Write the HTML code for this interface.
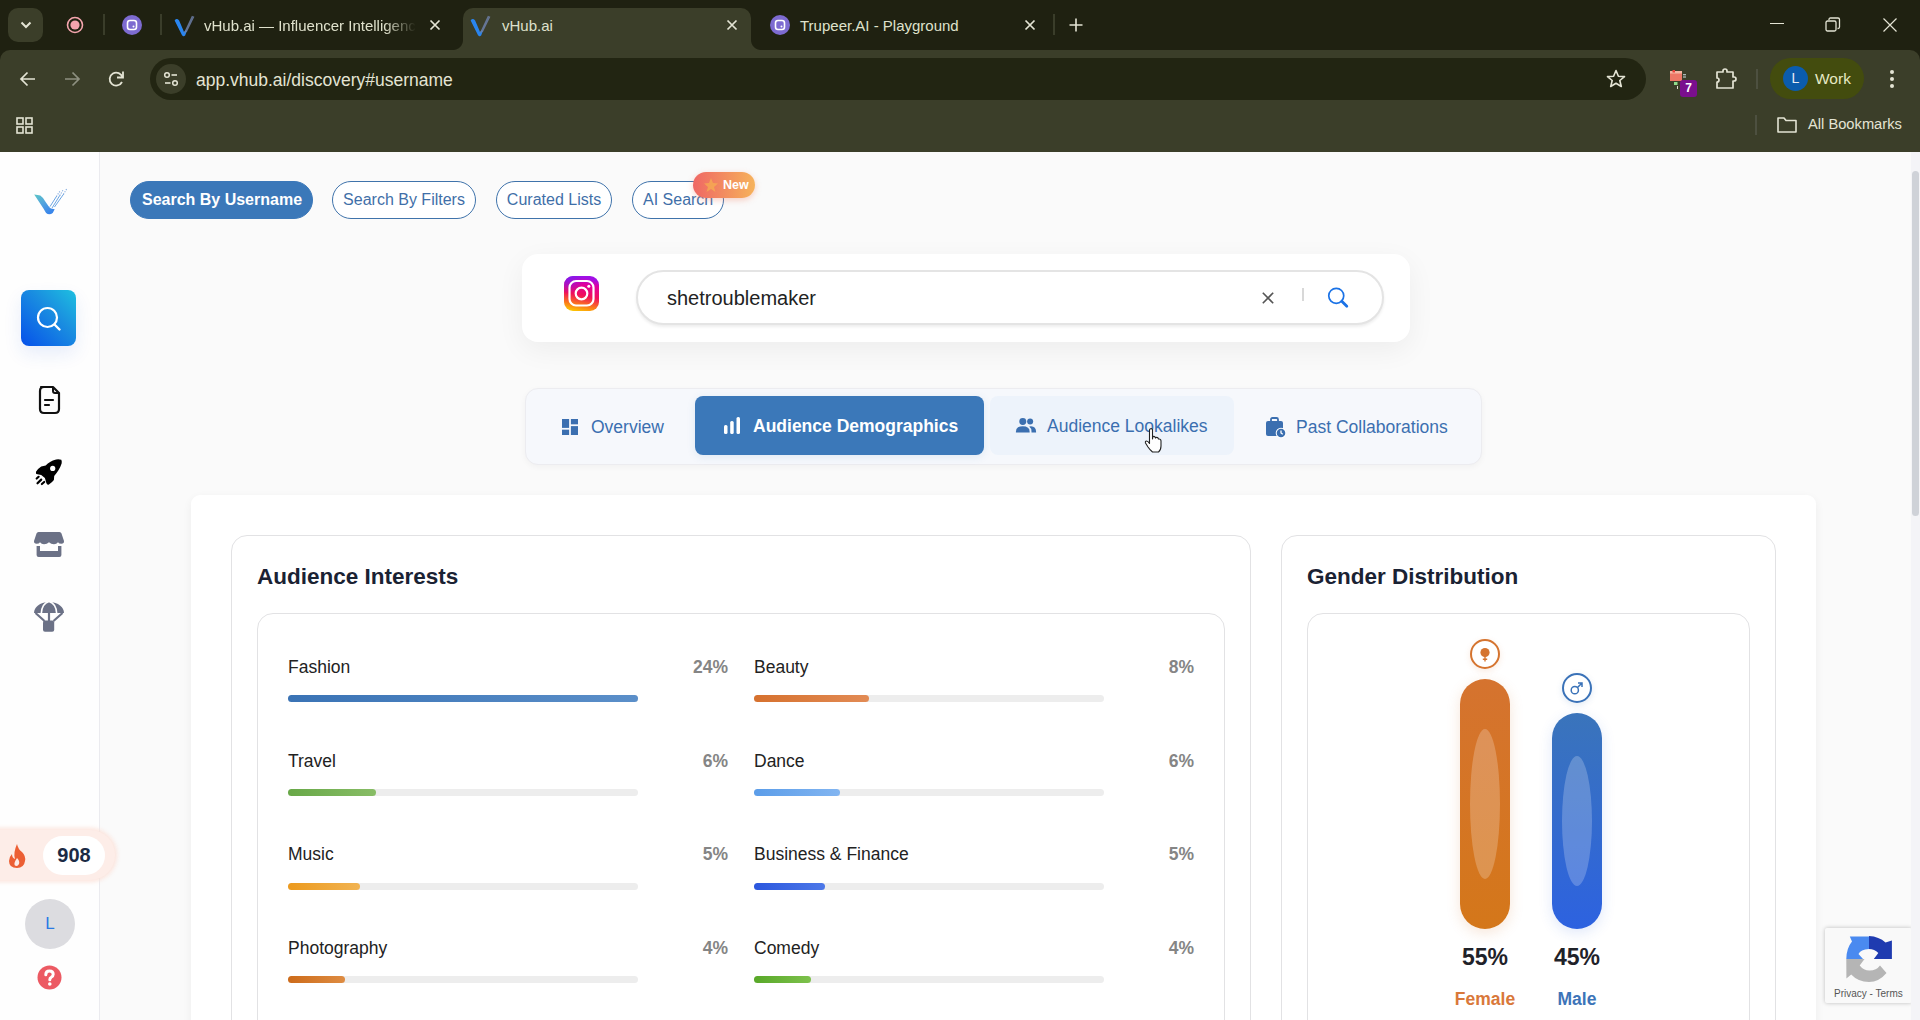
<!DOCTYPE html>
<html><head><meta charset="utf-8">
<style>
*{box-sizing:border-box;margin:0;padding:0}
html,body{width:1920px;height:1020px;overflow:hidden;font-family:"Liberation Sans",sans-serif;background:#1f2111}
.abs{position:absolute}
#tabs{position:absolute;left:0;top:0;width:1920px;height:50px;background:#1f2111}
#toolbar{position:absolute;left:0;top:50px;width:1920px;height:102px;background:#3b3e29;border-radius:10px 10px 0 0}
#page{position:absolute;left:0;top:152px;width:1920px;height:868px;background:#fafafa;overflow:hidden}
.pill{display:flex;align-items:center;justify-content:center;border-radius:20px;border:1.3px solid #3f73ab;background:#fff;color:#3f6fa8;font-size:16px;white-space:nowrap}
.pill.act{background:#3b78b9;border-color:#3b78b9;color:#fff;font-weight:bold}
.tabt{font-size:17.5px;color:#3b6fb0;white-space:nowrap}
.h2{font-size:22.5px;font-weight:bold;color:#1a2233;white-space:nowrap}
.lbl{font-size:17.5px;color:#222;white-space:nowrap}
.pct{font-size:17.5px;font-weight:bold;color:#858585;text-align:right;width:60px;white-space:nowrap}
.track{height:7.3px;border-radius:4px;background:#ededed;width:350px}
.fill{height:7.3px;border-radius:4px}
.gp{width:100px;text-align:center;font-size:23px;font-weight:bold;color:#1f2229}
.gl{width:100px;text-align:center;font-size:17.5px;font-weight:bold}
.tabtitle{position:absolute;font-size:15px;color:#dfe1cc;white-space:nowrap}
</style></head>
<body>
<div id="tabs">
  <!-- chevron button -->
  <div class="abs" style="left:8px;top:8px;width:35px;height:34px;border-radius:10px;background:#3b3e29"></div>
  <svg class="abs" style="left:19px;top:18px" width="14" height="14" viewBox="0 0 14 14"><path d="M2.5 4.5 L7 9 L11.5 4.5" stroke="#e4e4d4" stroke-width="2" fill="none"/></svg>
  <!-- record icon -->
  <svg class="abs" style="left:66px;top:16px" width="18" height="18" viewBox="0 0 18 18"><circle cx="9" cy="9" r="7.5" stroke="#f4a5ae" stroke-width="1.6" fill="none"/><circle cx="9" cy="9" r="4.6" fill="#f4a5ae"/></svg>
  <div class="abs" style="left:103px;top:14px;width:2px;height:21px;background:#3a3d2a"></div>
  <svg class="abs" style="left:122px;top:15px" width="20" height="20" viewBox="0 0 20 20"><circle cx="10" cy="10" r="10" fill="#7d6bd1"/><rect x="5.5" y="5.5" width="9" height="9" rx="2.5" stroke="#fff" stroke-width="1.6" fill="none"/><circle cx="11.5" cy="11.5" r="1" fill="#fff"/></svg>
  <div class="abs" style="left:160px;top:14px;width:2px;height:21px;background:#3a3d2a"></div>
  <!-- tab1 -->
  <svg class="abs" style="left:173px;top:13px" width="22" height="24" viewBox="0 0 22 24"><path d="M2.5 7.5 Q4 6 5.5 8 L10 18.5 Q11 20.5 12 19 L13 18 L11.5 22 Q10.5 23 9.5 21.5 Z" fill="#2a86f0" stroke="#2a86f0" stroke-width="1.6" stroke-linejoin="round"/><path d="M11.5 20 L19.5 3 M13.2 19 L20.8 3.5" stroke="#6d7fa8" stroke-width="1.3" opacity=".85"/></svg>
  <div class="tabtitle" style="left:204px;top:16.5px;width:212px;overflow:hidden;-webkit-mask-image:linear-gradient(90deg,#000 85%,transparent 100%)">vHub.ai — Influencer Intelligence</div>
  <svg class="abs" style="left:429px;top:19px" width="12" height="12" viewBox="0 0 12 12"><path d="M1.5 1.5 L10.5 10.5 M10.5 1.5 L1.5 10.5" stroke="#e4e4d4" stroke-width="1.7"/></svg>
  <!-- active tab -->
  <div class="abs" style="left:463px;top:8px;width:288px;height:42px;background:#3b3e29;border-radius:10px 10px 0 0"></div><div class="abs" style="left:453px;top:40px;width:10px;height:10px;background:radial-gradient(circle at 0 0,#1f2111 9.5px,#3b3e29 10.5px)"></div><div class="abs" style="left:751px;top:40px;width:10px;height:10px;background:radial-gradient(circle at 100% 0,#1f2111 9.5px,#3b3e29 10.5px)"></div>
  <svg class="abs" style="left:469px;top:13px" width="22" height="24" viewBox="0 0 22 24"><path d="M2.5 7.5 Q4 6 5.5 8 L10 18.5 Q11 20.5 12 19 L13 18 L11.5 22 Q10.5 23 9.5 21.5 Z" fill="#2a86f0" stroke="#2a86f0" stroke-width="1.6" stroke-linejoin="round"/><path d="M11.5 20 L19.5 3 M13.2 19 L20.8 3.5" stroke="#6d7fa8" stroke-width="1.3" opacity=".85"/></svg>
  <div class="tabtitle" style="left:502px;top:16.5px">vHub.ai</div>
  <svg class="abs" style="left:726px;top:19px" width="12" height="12" viewBox="0 0 12 12"><path d="M1.5 1.5 L10.5 10.5 M10.5 1.5 L1.5 10.5" stroke="#e4e4d4" stroke-width="1.7"/></svg>
  <!-- tab3 -->
  <svg class="abs" style="left:770px;top:15px" width="20" height="20" viewBox="0 0 20 20"><circle cx="10" cy="10" r="10" fill="#7d6bd1"/><rect x="5.5" y="5.5" width="9" height="9" rx="2.5" stroke="#fff" stroke-width="1.6" fill="none"/><circle cx="11.5" cy="11.5" r="1" fill="#fff"/></svg>
  <div class="tabtitle" style="left:800px;top:16.5px">Trupeer.AI - Playground</div>
  <svg class="abs" style="left:1024px;top:19px" width="12" height="12" viewBox="0 0 12 12"><path d="M1.5 1.5 L10.5 10.5 M10.5 1.5 L1.5 10.5" stroke="#e4e4d4" stroke-width="1.7"/></svg>
  <div class="abs" style="left:1053px;top:14px;width:2px;height:21px;background:#3a3d2a"></div>
  <svg class="abs" style="left:1068px;top:17px" width="16" height="16" viewBox="0 0 16 16"><path d="M8 1.5 V14.5 M1.5 8 H14.5" stroke="#e4e4d4" stroke-width="1.6"/></svg>
  <!-- window controls -->
  <div class="abs" style="left:1770px;top:23px;width:14px;height:1.2px;background:#e4e4d4"></div>
  <svg class="abs" style="left:1825px;top:17px" width="16" height="16" viewBox="0 0 16 16"><rect x="1" y="4" width="10" height="10" rx="1.5" stroke="#e4e4d4" stroke-width="1.3" fill="none"/><path d="M4 3 V2.5 Q4 1 5.5 1 H13 Q14.5 1 14.5 2.5 V10 Q14.5 11.5 13 11.5 H12.5" stroke="#e4e4d4" stroke-width="1.3" fill="none"/></svg>
  <svg class="abs" style="left:1882px;top:17px" width="16" height="16" viewBox="0 0 16 16"><path d="M1.5 1.5 L14.5 14.5 M14.5 1.5 L1.5 14.5" stroke="#e4e4d4" stroke-width="1.2"/></svg>
</div>

<div id="toolbar">
  <svg class="abs" style="left:18px;top:19px" width="20" height="20" viewBox="0 0 20 20"><path d="M17 10 H3.5 M9.5 3.5 L3 10 L9.5 16.5" stroke="#e4e4d4" stroke-width="1.7" fill="none"/></svg>
  <svg class="abs" style="left:62px;top:19px" width="20" height="20" viewBox="0 0 20 20"><path d="M3 10 H16.5 M10.5 3.5 L17 10 L10.5 16.5" stroke="#8e9080" stroke-width="1.7" fill="none"/></svg>
  <svg class="abs" style="left:107px;top:19px" width="20" height="20" viewBox="0 0 20 20"><path d="M15.5 8.5 A6.5 6.5 0 1 0 15 13" stroke="#e4e4d4" stroke-width="1.8" fill="none"/><path d="M16 2.5 V8.5 H10" stroke="#e4e4d4" stroke-width="1.8" fill="none"/></svg>
  <!-- address bar -->
  <div class="abs" style="left:150px;top:8px;width:1496px;height:42px;border-radius:21px;background:#222512"></div>
  <div class="abs" style="left:156px;top:14px;width:30px;height:30px;border-radius:15px;background:#3b3e29"></div>
  <svg class="abs" style="left:162px;top:20px" width="18" height="18" viewBox="0 0 18 18"><circle cx="5" cy="5" r="2.3" stroke="#e4e4d4" stroke-width="1.5" fill="none"/><path d="M9.5 5 H15" stroke="#e4e4d4" stroke-width="1.6"/><circle cx="13" cy="13" r="2.3" stroke="#e4e4d4" stroke-width="1.5" fill="none"/><path d="M3 13 H8.5" stroke="#e4e4d4" stroke-width="1.6"/></svg>
  <div class="abs" style="left:196px;top:20px;font-size:17.5px;color:#e4e4d4;letter-spacing:0px">app.vhub.ai/discovery#username</div>
  <svg class="abs" style="left:1605px;top:18px" width="22" height="22" viewBox="0 0 22 22"><path d="M11 2.5 L13.4 8.2 L19.5 8.6 L14.8 12.5 L16.3 18.5 L11 15.2 L5.7 18.5 L7.2 12.5 L2.5 8.6 L8.6 8.2 Z" stroke="#e4e4d4" stroke-width="1.6" fill="none" stroke-linejoin="round"/></svg>
  <!-- extension -->
  <svg class="abs" style="left:1668px;top:15px" width="32" height="32" viewBox="0 0 32 32"><rect x="2" y="6" width="12" height="10" fill="#ec7766"/><rect x="2" y="6" width="12" height="2.5" fill="#f2b7a4"/><rect x="4.5" y="5" width="2.5" height="2.5" fill="#e8403a"/><path d="M15 9.8 H18 M15 12 H18" stroke="#cfe0e6" stroke-width="1.1"/><rect x="6" y="17" width="3.5" height="3" fill="#8fdc8a"/><path d="M9.5 21 V24" stroke="#f0f0e0" stroke-width="0.9"/></svg>
  <div class="abs" style="left:1680px;top:30px;width:17px;height:17px;border-radius:3px;background:#7a0f8e;color:#fff;font-size:12px;font-weight:bold;text-align:center;line-height:17px">7</div>
  <svg class="abs" style="left:1714px;top:17px" width="24" height="24" viewBox="0 0 24 24"><path d="M3 5 H9 V4 Q9 2 11 2 Q13 2 13 4 V5 H19 V10 H20 Q22 10 22 12 Q22 14 20 14 H19 V21 H3 V15 Q5 15 5 13 Q5 11 3 11 Z" stroke="#e4e4d4" stroke-width="1.7" fill="none" stroke-linejoin="round"/></svg>
  <div class="abs" style="left:1756px;top:19px;width:2px;height:20px;background:#4d5040"></div>
  <div class="abs" style="left:1770px;top:8px;width:94px;height:41px;border-radius:21px;background:#434c0e"></div>
  <div class="abs" style="left:1783px;top:16px;width:25px;height:25px;border-radius:13px;background:#0b5cad;color:#e8ecf4;font-size:14px;text-align:center;line-height:25px">L</div>
  <div class="abs" style="left:1815px;top:20px;font-size:15.5px;color:#e6e9c4">Work</div>
  <svg class="abs" style="left:1886px;top:18px" width="12" height="22" viewBox="0 0 12 22"><circle cx="6" cy="4" r="2" fill="#e4e4d4"/><circle cx="6" cy="11" r="2" fill="#e4e4d4"/><circle cx="6" cy="18" r="2" fill="#e4e4d4"/></svg>
  <!-- bookmarks row -->
  <svg class="abs" style="left:15px;top:66px" width="20" height="20" viewBox="0 0 20 20"><rect x="2" y="2" width="6" height="6" stroke="#e4e4d4" stroke-width="1.6" fill="none"/><rect x="11" y="2" width="6" height="6" stroke="#e4e4d4" stroke-width="1.6" fill="none"/><rect x="2" y="11" width="6" height="6" stroke="#e4e4d4" stroke-width="1.6" fill="none"/><rect x="11" y="11" width="6" height="6" stroke="#e4e4d4" stroke-width="1.6" fill="none"/></svg>
  <div class="abs" style="left:1755px;top:65px;width:2px;height:20px;background:#4d5040"></div>
  <svg class="abs" style="left:1776px;top:65px" width="22" height="20" viewBox="0 0 22 20"><path d="M2 3 H8 L10 5.5 H20 V17 H2 Z" stroke="#e4e4d4" stroke-width="1.6" fill="none" stroke-linejoin="round"/></svg>
  <div class="abs" style="left:1808px;top:66px;font-size:14.7px;color:#e4e4d4">All Bookmarks</div>
</div>

<div id="page"></div>
<!-- sidebar -->
<div class="abs" style="left:0;top:152px;width:100px;height:868px;background:#fefefe;border-right:1px solid #ebebef"></div>
<svg class="abs" style="left:32px;top:184px" width="38" height="34" viewBox="0 0 38 34"><defs><linearGradient id="lg1" x1="0" y1="0" x2="0.6" y2="1"><stop offset="0" stop-color="#5cc6c6"/><stop offset="0.5" stop-color="#54a6de"/><stop offset="1" stop-color="#3a86ea"/></linearGradient></defs><path d="M2.2 10.4 Q6 10.6 8.3 11.6 Q11 13.5 13.3 17.4 L16.6 22.3 Q18 24 19 24.4 L22.7 25.2 L20.7 28.9 Q19 30.2 17.4 30.2 Q15.5 30.2 14.1 28.9 Q12.8 27 11.6 24.8 Z" fill="url(#lg1)"/><path d="M18.2 22.3 L24.4 12.5 M20.3 23.6 L27.7 11.6 M22.7 22.7 L31.4 10.4" stroke="#5a9be0" stroke-width="0.9" stroke-linecap="round"/><path d="M24.4 12.5 L28.5 6.3 M27.7 11.6 L31.4 5.5 M31.4 10.4 L35.1 4.2" stroke="#6a9ad8" stroke-width="1.1" stroke-dasharray="1.2 1.3" opacity=".8"/></svg>
<div class="abs" style="left:21px;top:290px;width:55px;height:56px;border-radius:8px;background:linear-gradient(45deg,#0650ea 0%,#1a8fe0 60%,#1ec0e0 100%);box-shadow:0 8px 18px rgba(30,90,220,0.10)"></div>
<svg class="abs" style="left:34px;top:304px" width="30" height="30" viewBox="0 0 30 30"><circle cx="13.5" cy="13.5" r="9.5" stroke="#fff" stroke-width="2.2" fill="none"/><path d="M20.5 20.5 L25.5 25.5" stroke="#fff" stroke-width="2.4" stroke-linecap="round"/></svg>
<!-- doc icon -->
<svg class="abs" style="left:36px;top:384px" width="28" height="32" viewBox="0 0 28 32"><path d="M5 3 H17 L23 9 V25 Q23 29 19 29 H8 Q4 29 4 25 V7 Q4 3 8 3 Z" stroke="#111" stroke-width="2.2" fill="none" stroke-linejoin="round"/><path d="M17 3 V7 Q17 9 19 9 H23" stroke="#111" stroke-width="2" fill="none"/><path d="M9 16 H17 M9 21 H13" stroke="#111" stroke-width="2.2" stroke-linecap="round"/></svg>
<!-- rocket -->
<svg class="abs" style="left:34px;top:456px" width="30" height="32" viewBox="0 0 30 32"><path d="M27.3 3.8 Q25 3 22.1 3.5 Q18.5 4.2 16.5 5.7 Q13.5 7.5 11.7 9.4 L7.2 10.5 Q4 12.5 2 15.8 Q1.8 17.5 2.3 18 L7.2 19.1 L10.9 22.1 L12.4 27.3 Q13.2 28.8 14.6 28.8 Q18 26.5 19.9 24 L20.2 19.9 Q22.5 17.5 24.3 14.6 Q26.5 11 27.7 7.2 Q28 5 27.3 3.8 Z" fill="#000"/><circle cx="18.7" cy="12.4" r="2.6" fill="#fff"/><path d="M2.7 22.5 L4.6 20.8 M3.5 27.3 L7.2 23.6 M7.9 28 L10.2 26" stroke="#000" stroke-width="2.2" stroke-linecap="round"/></svg>
<!-- store -->
<svg class="abs" style="left:33px;top:530px" width="32" height="30" viewBox="0 0 32 30"><path d="M5.5 2 H26.5 Q28 2 28.5 3.5 L31 11 Q31.2 13.8 28.5 13.8 Q26 13.8 25 12.2 Q23.5 14.2 21 14.2 Q18 14.2 16 12.2 Q14 14.2 11 14.2 Q8.5 14.2 7 12.2 Q6 13.8 3.5 13.8 Q0.8 13.8 1 11 L3.5 3.5 Q4 2 5.5 2 Z" fill="#6b7186"/><path d="M3.6 16 H7 V21 H25 V16 H28.4 V25 Q28.4 27 26.4 27 H5.6 Q3.6 27 3.6 25 Z" fill="#6b7186"/></svg>
<!-- parachute -->
<svg class="abs" style="left:34px;top:600px" width="30" height="34" viewBox="0 0 30 34"><path d="M0 13 Q0.5 3.5 15 1.8 Q29.5 3.5 30 13 Z" fill="#6b7186"/><path d="M7.3 13.5 Q7.8 3.5 15 1.5 Q22.2 3.5 22.7 13.5" stroke="#fff" stroke-width="1.6" fill="none"/><path d="M1.5 13 L10.5 21 M28.5 13 L19.5 21 M15 13 V21" stroke="#6b7186" stroke-width="2.2"/><rect x="9" y="20.6" width="11.2" height="11.2" rx="2" fill="#6b7186"/></svg>
<!-- streak -->
<div class="abs" style="left:-30px;top:830px;width:145px;height:50px;border-radius:25px;background:#fdede8;box-shadow:0 0 4px 2px rgba(252,225,216,.9)"></div>
<svg class="abs" style="left:7px;top:842px" width="20" height="28" viewBox="0 0 20 28"><path d="M10 2 Q11 7 15 10 Q19 14 18 19 Q17 26 10 26 Q2 26 2 19 Q2 15 5 12 Q5 16 8 17 Q6 11 10 2 Z" fill="#ec5f34"/><path d="M10 16 Q13 19 12 22 Q11 24 9.5 24 Q7 24 7.5 21 Q8 19 10 16 Z" fill="#fdebe6"/></svg>
<div class="abs" style="left:43px;top:836px;width:62px;height:39px;border-radius:20px;background:#fff;color:#1b2a44;font-weight:bold;font-size:20px;text-align:center;line-height:39px">908</div>
<!-- avatar -->
<div class="abs" style="left:25px;top:899px;width:50px;height:50px;border-radius:25px;background:#dcdce0;color:#2a7ae4;font-size:17px;text-align:center;line-height:50px">L</div>
<!-- help -->
<svg class="abs" style="left:37px;top:965px" width="25" height="25" viewBox="0 0 25 25"><circle cx="12.5" cy="12.5" r="12" fill="#ec5a63"/><path d="M8.8 9.8 Q8.8 6 12.5 6 Q16.2 6 16.2 9.3 Q16.2 11.2 14.2 12.3 Q12.8 13 12.8 14.8" stroke="#fff" stroke-width="3" fill="none" stroke-linecap="round"/><circle cx="12.8" cy="19" r="1.8" fill="#fff"/></svg>

<!-- top pills -->
<div class="abs pill act" style="left:130px;top:181px;width:183px;height:38px;padding-left:1px">Search By Username</div>
<div class="abs pill" style="left:332px;top:181px;width:144px;height:38px">Search By Filters</div>
<div class="abs pill" style="left:496px;top:181px;width:116px;height:38px">Curated Lists</div>
<div class="abs pill" style="left:632px;top:181px;width:92px;height:38px;justify-content:flex-start;padding-left:10px">AI Search</div>
<div class="abs" style="left:693px;top:172px;width:62px;height:26px;border-radius:13px;background:linear-gradient(90deg,#ef6764,#f6b25b);box-shadow:0 2px 6px rgba(240,120,90,.35);color:#fff;font-weight:bold;font-size:12.5px;line-height:26px;padding-left:30px">New</div>
<svg class="abs" style="left:703px;top:177px" width="16" height="16" viewBox="0 0 16 16"><path d="M8 1 L10 6 L15 6.5 L11 10 L12.5 15 L8 12 L3.5 15 L5 10 L1 6.5 L6 6 Z" fill="#f7c04a" opacity=".55"/></svg>

<!-- search card -->
<div class="abs" style="left:522px;top:254px;width:888px;height:88px;border-radius:16px;background:#fff;box-shadow:0 8px 28px rgba(0,0,0,.055)"></div>
<svg class="abs" style="left:564px;top:276px" width="35" height="35" viewBox="0 0 35 35"><defs><linearGradient id="ig" x1="0.35" y1="0" x2="0.15" y2="1"><stop offset="0" stop-color="#a10fe6"/><stop offset=".18" stop-color="#e0009e"/><stop offset=".5" stop-color="#f0105a"/><stop offset=".78" stop-color="#fb7a1a"/><stop offset="1" stop-color="#fcd000"/></linearGradient><radialGradient id="ig2" cx="0.1" cy="0" r="0.5"><stop offset="0" stop-color="#7a1cf0"/><stop offset="1" stop-color="#7a1cf0" stop-opacity="0"/></radialGradient></defs><rect x="0" y="0" width="35" height="35" rx="9" fill="url(#ig)"/><rect x="0" y="0" width="35" height="35" rx="9" fill="url(#ig2)"/><rect x="5.5" y="5" width="24" height="24.5" rx="6.5" stroke="#fff" stroke-width="2.2" fill="none"/><circle cx="17.5" cy="17.5" r="5.8" stroke="#fff" stroke-width="2.2" fill="none"/><circle cx="24.8" cy="10.3" r="1.5" fill="#fff"/></svg>
<div class="abs" style="left:636px;top:270px;width:748px;height:55px;border-radius:28px;background:#fff;border:2px solid #e4e4e4;box-shadow:0 2px 3px rgba(0,0,0,.07)"></div>
<div class="abs" style="left:667px;top:287px;font-size:20px;color:#222">shetroublemaker</div>
<svg class="abs" style="left:1261px;top:291px" width="14" height="14" viewBox="0 0 14 14"><path d="M1.8 1.8 L12.2 12.2 M12.2 1.8 L1.8 12.2" stroke="#555" stroke-width="1.6"/></svg>
<div class="abs" style="left:1302px;top:288px;width:1.5px;height:13px;background:#d8d8d8"></div>
<svg class="abs" style="left:1326px;top:285px" width="26" height="26" viewBox="0 0 26 26"><circle cx="10.25" cy="10.8" r="7.5" stroke="#1a72e6" stroke-width="1.7" fill="none"/><path d="M15.8 16.3 L20.8 21.3" stroke="#1a72e6" stroke-width="2.8" stroke-linecap="round"/></svg>

<!-- tab bar -->
<div class="abs" style="left:525px;top:388px;width:957px;height:77px;border-radius:13px;background:#f6f8fc;border:1px solid #ececf0;box-shadow:0 2px 6px rgba(0,0,0,.04)"></div>
<div class="abs" style="left:695px;top:396px;width:289px;height:59px;border-radius:8px;background:#3b78b9;box-shadow:0 2px 8px rgba(59,120,185,.12)"></div>
<div class="abs" style="left:990px;top:396px;width:244px;height:59px;border-radius:8px;background:#edf3fb"></div>
<svg class="abs" style="left:562px;top:419px" width="16" height="16" viewBox="0 0 18 18"><rect x="0" y="0" width="8" height="10" fill="#3b6fb0"/><rect x="10" y="0" width="8" height="6" fill="#3b6fb0"/><rect x="0" y="12" width="8" height="6" fill="#3b6fb0"/><rect x="10" y="8" width="8" height="10" fill="#3b6fb0"/></svg>
<div class="abs tabt" style="left:591px;top:417px">Overview</div>
<svg class="abs" style="left:722px;top:416px" width="20" height="20" viewBox="0 0 20 20"><rect x="2" y="9" width="3.5" height="9" rx="1.5" fill="#fff"/><rect x="8.2" y="5" width="3.5" height="13" rx="1.5" fill="#fff"/><rect x="14.5" y="1" width="3.5" height="17" rx="1.5" fill="#fff"/></svg>
<div class="abs tabt" style="left:753px;top:416px;color:#fff;font-weight:bold">Audience Demographics</div>
<svg class="abs" style="left:1015px;top:417px" width="22" height="16.5" viewBox="0 0 24 18"><circle cx="8.5" cy="5" r="3.8" fill="#3b6fb0"/><path d="M1 16 Q1 10 8.5 10 Q16 10 16 16 V17 H1 Z" fill="#3b6fb0"/><circle cx="16.5" cy="5" r="3.3" fill="#3b6fb0"/><path d="M17.5 10 Q23 10.5 23 16 V17 H18 V16 Q18 12 15.5 10.3 Z" fill="#3b6fb0"/></svg>
<div class="abs tabt" style="left:1047px;top:416px">Audience Lookalikes</div>
<svg class="abs" style="left:1265px;top:417px" width="22" height="22" viewBox="0 0 22 22"><path d="M6 4 V2.5 Q6 1 7.5 1 H11.5 Q13 1 13 2.5 V4" stroke="#3b6fb0" stroke-width="1.8" fill="none"/><rect x="1" y="4" width="17" height="15" rx="2" fill="#3b6fb0"/><circle cx="16" cy="16" r="5.3" fill="#fff"/><circle cx="16" cy="16" r="4.3" fill="#3b6fb0"/><path d="M16 13.5 V16 L17.8 17.2" stroke="#fff" stroke-width="1.3" fill="none"/></svg>
<div class="abs tabt" style="left:1296px;top:417px">Past Collaborations</div>
<!-- cursor -->
<svg class="abs" style="left:1143px;top:427px" width="22" height="28" viewBox="0 0 22 28"><path d="M7 2 Q9 1 9.5 3 V12 L10 9.5 Q12 9 12.5 11 L13 10.5 Q15 10 15.5 12 L16 12 Q18 12 18 14 V19 Q18 23 15.5 25 H9.5 Q7 23 5 20 L2.5 16 Q2 14 3.5 14 Q5 14 6.5 16.5 V3 Q6.5 2 7 2 Z" fill="#fff" stroke="#222" stroke-width="1.1" stroke-linejoin="round"/></svg>

<!-- main card -->
<div class="abs" style="left:191px;top:495px;width:1625px;height:600px;border-radius:9px;background:#fff;box-shadow:0 3px 10px rgba(0,0,0,.055)"></div>
<!-- interests -->
<div class="abs" style="left:231px;top:535px;width:1020px;height:600px;border-radius:16px;border:1px solid #e2e2e4;background:#fff"></div>
<div class="abs h2" style="left:257px;top:563.5px">Audience Interests</div>
<div class="abs" style="left:257px;top:613px;width:968px;height:600px;border-radius:16px;border:1px solid #e2e2e4;background:#fff"></div>

<div class="abs lbl" style="left:288px;top:657.0px">Fashion</div>
<div class="abs pct" style="left:668px;top:657.0px">24%</div>
<div class="abs track" style="left:288px;top:695px"></div>
<div class="abs fill" style="left:288px;top:695px;width:350px;background:linear-gradient(90deg,#3a73b5,#5b8fc9)"></div>
<div class="abs lbl" style="left:288px;top:750.8px">Travel</div>
<div class="abs pct" style="left:668px;top:750.8px">6%</div>
<div class="abs track" style="left:288px;top:789px"></div>
<div class="abs fill" style="left:288px;top:789px;width:88px;background:linear-gradient(90deg,#68a848,#88bd66)"></div>
<div class="abs lbl" style="left:288px;top:843.7px">Music</div>
<div class="abs pct" style="left:668px;top:843.7px">5%</div>
<div class="abs track" style="left:288px;top:883px"></div>
<div class="abs fill" style="left:288px;top:883px;width:72px;background:linear-gradient(90deg,#ec9a1e,#f1b352)"></div>
<div class="abs lbl" style="left:288px;top:937.5px">Photography</div>
<div class="abs pct" style="left:668px;top:937.5px">4%</div>
<div class="abs track" style="left:288px;top:976px"></div>
<div class="abs fill" style="left:288px;top:976px;width:57px;background:linear-gradient(90deg,#cd6b1a,#de8c42)"></div>
<div class="abs lbl" style="left:754px;top:657.0px">Beauty</div>
<div class="abs pct" style="left:1134px;top:657.0px">8%</div>
<div class="abs track" style="left:754px;top:695px"></div>
<div class="abs fill" style="left:754px;top:695px;width:115px;background:linear-gradient(90deg,#d6712e,#e28b55)"></div>
<div class="abs lbl" style="left:754px;top:750.8px">Dance</div>
<div class="abs pct" style="left:1134px;top:750.8px">6%</div>
<div class="abs track" style="left:754px;top:789px"></div>
<div class="abs fill" style="left:754px;top:789px;width:86px;background:linear-gradient(90deg,#5b9de9,#82b5f1)"></div>
<div class="abs lbl" style="left:754px;top:843.7px">Business &amp; Finance</div>
<div class="abs pct" style="left:1134px;top:843.7px">5%</div>
<div class="abs track" style="left:754px;top:883px"></div>
<div class="abs fill" style="left:754px;top:883px;width:71px;background:linear-gradient(90deg,#2b57de,#4d78e8)"></div>
<div class="abs lbl" style="left:754px;top:937.5px">Comedy</div>
<div class="abs pct" style="left:1134px;top:937.5px">4%</div>
<div class="abs track" style="left:754px;top:976px"></div>
<div class="abs fill" style="left:754px;top:976px;width:57px;background:linear-gradient(90deg,#58a828,#7dc14c)"></div>

<!-- gender -->
<div class="abs" style="left:1281px;top:535px;width:495px;height:600px;border-radius:16px;border:1px solid #e2e2e4;background:#fff"></div>
<div class="abs h2" style="left:1307px;top:563.5px">Gender Distribution</div>
<div class="abs" style="left:1307px;top:613px;width:443px;height:600px;border-radius:16px;border:1px solid #e2e2e4;background:#fff"></div>
<div class="abs" style="left:1470px;top:639px;width:30px;height:30px;border-radius:15px;border:2px solid #d5742f;background:#fff;box-shadow:0 2px 6px rgba(213,116,47,.15)"></div>
<svg class="abs" style="left:1476.5px;top:645.5px" width="16" height="18" viewBox="0 0 16 18"><circle cx="8" cy="6.5" r="4.6" fill="#d5742f"/><path d="M8 10 V15.5 M5.8 13.3 H10.2" stroke="#d5742f" stroke-width="1.4"/></svg>
<div class="abs" style="left:1562px;top:673px;width:30px;height:30px;border-radius:15px;border:2px solid #3a72b8;background:#fff;box-shadow:0 2px 6px rgba(58,114,184,.15)"></div>
<svg class="abs" style="left:1567px;top:678px" width="20" height="20" viewBox="0 0 20 20"><circle cx="7.8" cy="12.2" r="3.6" stroke="#3a72b8" stroke-width="1.5" fill="none"/><path d="M10.5 9.5 L15 5 M11 5 H15 V9" stroke="#3a72b8" stroke-width="1.5" fill="none"/></svg>
<div class="abs" style="left:1460px;top:679px;width:50px;height:250px;border-radius:25px;background:linear-gradient(180deg,#d5732f,#d4771a);box-shadow:0 4px 14px rgba(213,116,47,.18)"></div>
<div class="abs" style="left:1470px;top:729px;width:30px;height:150px;border-radius:50%;background:rgba(255,255,255,.22)"></div>
<div class="abs" style="left:1552px;top:713px;width:50px;height:216px;border-radius:25px;background:linear-gradient(180deg,#3a74bb,#2d62e0);box-shadow:0 4px 14px rgba(45,98,224,.15)"></div>
<div class="abs" style="left:1562px;top:756px;width:30px;height:130px;border-radius:50%;background:rgba(255,255,255,.22)"></div>
<div class="abs gp" style="left:1435px;top:944px">55%</div>
<div class="abs gp" style="left:1527px;top:944px">45%</div>
<div class="abs gl" style="left:1435px;top:989px;color:#d9783a">Female</div>
<div class="abs gl" style="left:1527px;top:989px;color:#3d74b8">Male</div>
<!-- recaptcha -->
<div class="abs" style="left:1825px;top:928px;width:87px;height:75px;background:#f9f9f9;box-shadow:0 0 4px rgba(0,0,0,.25);border-radius:2px"></div>
<svg class="abs" style="left:1846px;top:936px" width="46" height="46" viewBox="0 0 46 46"><path d="M0.3 23 Q0.5 12 6 5.5 L3.8 0.5 H23 V13 Q14.5 13.5 12.5 18 L17 23 Z" fill="#4a8af0"/><path d="M23 0 Q33 0.5 39.5 6.5 L45.9 4.4 V23 H27.8 L32.3 17 Q28.5 13 23 13 Z" fill="#1f3bb0"/><path d="M0.3 23 H18.5 L13.7 29.5 Q17.5 34.5 23.5 34.5 Q30.5 34.5 34 29.5 L40.5 37 Q33 46 23 46 Q12 46 5.2 38.6 L0.4 42.4 Z" fill="#b5b5b5"/></svg>
<div class="abs" style="left:1834px;top:988px;font-size:10px;color:#555;white-space:nowrap">Privacy - Terms</div>
<!-- scrollbar -->
<div class="abs" style="left:1911px;top:152px;width:9px;height:868px;background:#f4f4f7"></div>
<div class="abs" style="left:1912px;top:171px;width:7px;height:345px;border-radius:4px;background:#cfd2d8"></div>
</body></html>
